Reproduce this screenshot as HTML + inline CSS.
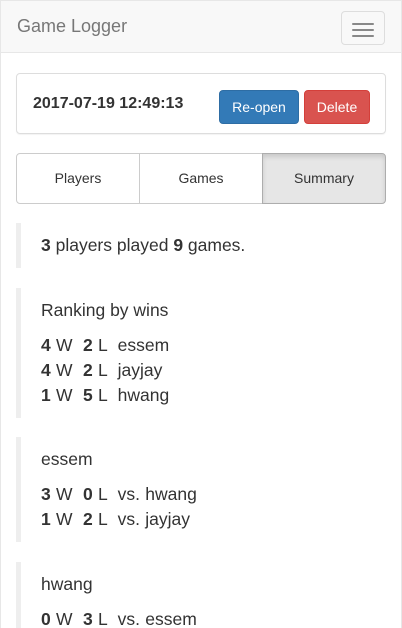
<!DOCTYPE html>
<html><head><meta charset="utf-8"><style>
*{box-sizing:border-box}
html,body{height:628px}
body{margin:0;width:402px;overflow:hidden;font-family:"Liberation Sans",sans-serif;color:#333;background:#fff;font-size:14px}
.wrap{border:1px solid #e7e7e7;border-bottom:none;height:628px;position:relative;overflow:hidden}
.nav{height:52px;background:#f8f8f8;border-bottom:1px solid #e7e7e7;position:relative}
.brand{position:absolute;left:16px;top:15px;font-size:18px;color:#777}
.tog{position:absolute;left:340px;top:10px;width:44px;height:34px;border:1px solid #ddd;border-radius:4px}
.tog i{position:absolute;left:10px;width:22px;height:2px;background:#888;border-radius:1px}
.panel{position:absolute;left:15px;top:72px;width:370px;height:61px;border:1px solid #ddd;border-radius:4px;box-shadow:0 1px 1px rgba(0,0,0,.05)}
.date{position:absolute;left:16px;top:21px;font-weight:bold;font-size:16px}
.btn{position:absolute;top:16px;height:34px;border-radius:4px;color:#fff;font-size:14px;text-align:center;line-height:32px}
.tabs{position:absolute;left:15px;top:152px;width:370px;height:51px;display:flex}
.tabs div{flex:1;border:1px solid #ccc;text-align:center;line-height:49px;font-size:14px;margin-left:-1px}
.tabs div:first-child{border-radius:4px 0 0 4px;margin-left:0}
.tabs div:last-child{border-radius:0 4px 4px 0;background:#e6e6e6;border-color:#adadad;box-shadow:inset 0 3px 5px rgba(0,0,0,.125)}
.bq{position:absolute;left:15px;width:370px;border-left:5px solid #eee;padding:10px 20px;font-size:17.5px;line-height:25px}
.bq p{margin:0 0 10px}
.bq .r{white-space:pre;word-spacing:0.4px}
</style></head><body><div class="wrap">
<div class="nav"><div class="brand">Game Logger</div><div class="tog"><i style="top:11px"></i><i style="top:17px"></i><i style="top:23px"></i></div></div>
<div class="panel"><div class="date">2017-07-19 12:49:13</div>
<div class="btn" style="left:202px;width:80px;background:#337ab7;border:1px solid #2e6da4">Re-open</div>
<div class="btn" style="left:287px;width:66px;background:#d9534f;border:1px solid #d43f3a">Delete</div></div>
<div class="tabs"><div>Players</div><div>Games</div><div>Summary</div></div>
<div class="bq" style="top:222px"><b>3</b> players played <b>9</b> games.</div>
<div class="bq" style="top:287px"><p>Ranking by wins</p>
<div class="r"><b>4</b> W  <b>2</b> L  essem</div><div class="r"><b>4</b> W  <b>2</b> L  jayjay</div><div class="r"><b>1</b> W  <b>5</b> L  hwang</div></div>
<div class="bq" style="top:436px"><p>essem</p>
<div class="r"><b>3</b> W  <b>0</b> L  vs. hwang</div><div class="r"><b>1</b> W  <b>2</b> L  vs. jayjay</div></div>
<div class="bq" style="top:561px;padding-bottom:0;height:67px"><p>hwang</p>
<div class="r"><b>0</b> W  <b>3</b> L  vs. essem</div></div>
</div></body></html>
